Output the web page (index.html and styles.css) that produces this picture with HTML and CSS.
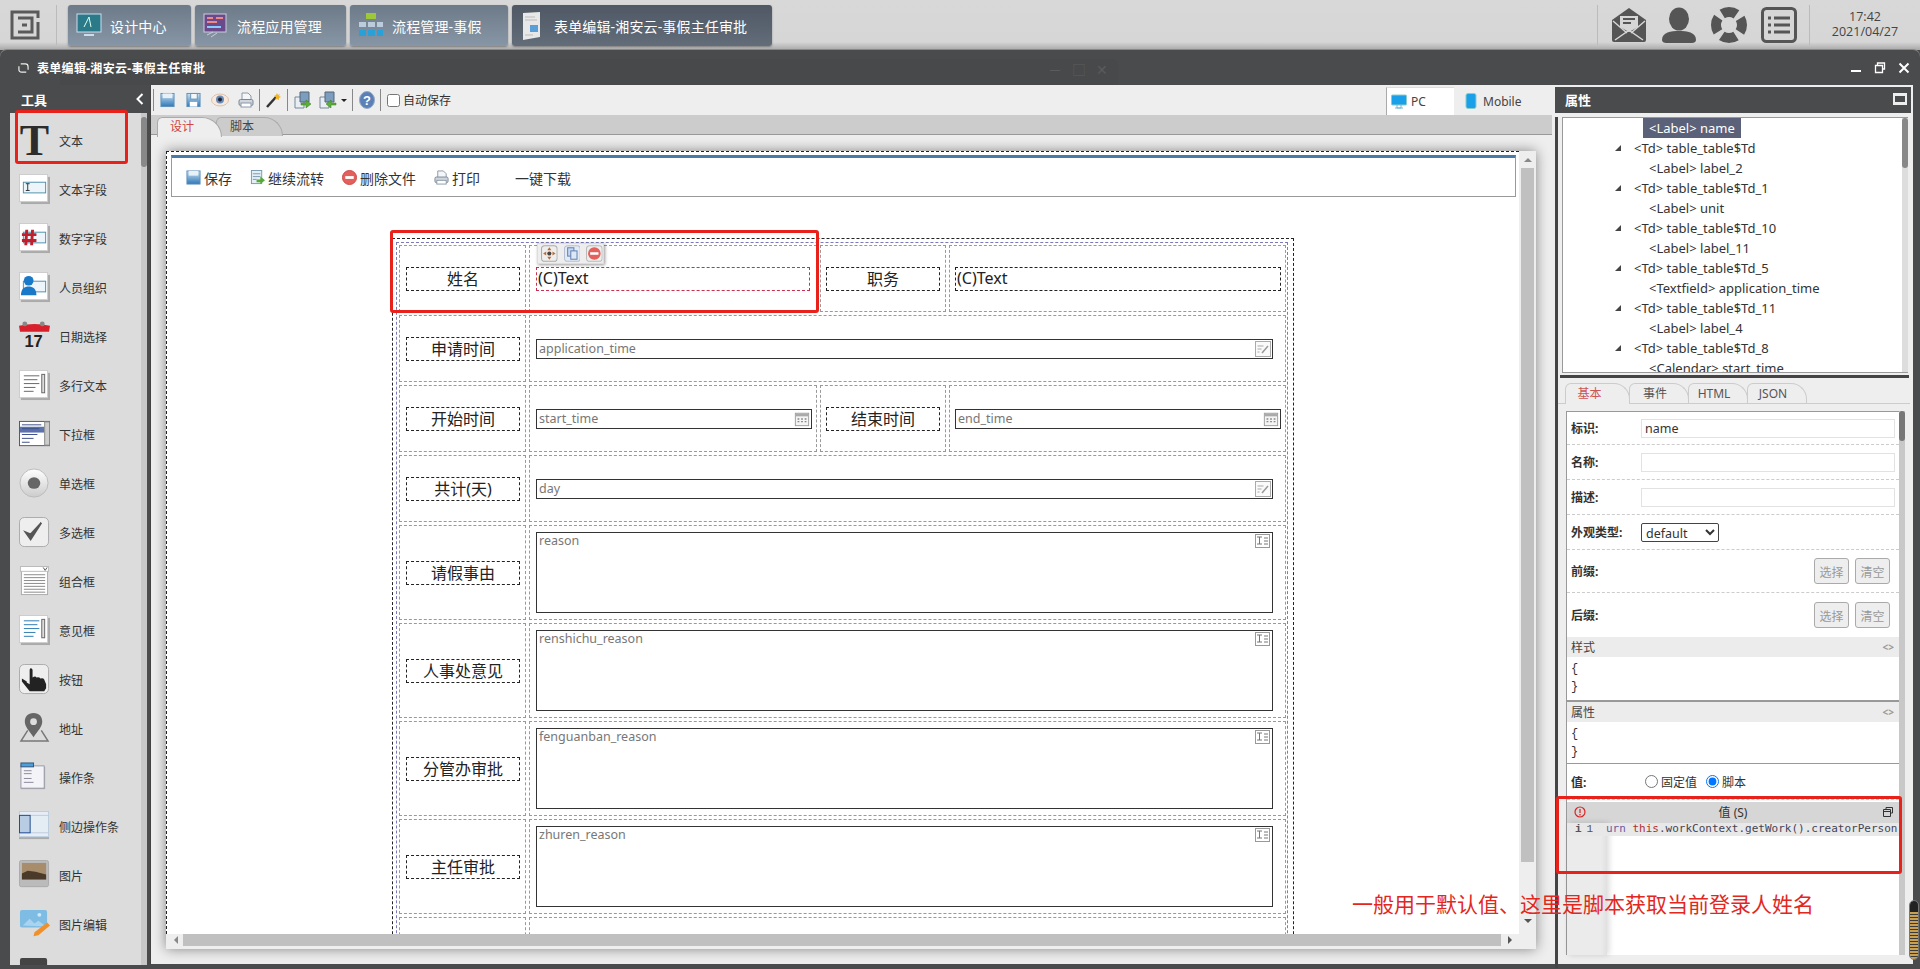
FILE: index.html
```html
<!DOCTYPE html>
<html lang="zh">
<head>
<meta charset="utf-8">
<title>表单编辑</title>
<link rel="stylesheet" href="styles.css">
</head>
<body>
<svg class="defs" aria-hidden="true">
  <symbol id="i-field" viewBox="0 0 32 32"><rect x="2" y="3" width="30" height="28" fill="#aaa"/><rect x=".5" y=".5" width="29" height="28" fill="#fff" stroke="#ccc"/><rect x="4.500" y="8.500" width="23" height="11" fill="#eef5fa" stroke="#4f90ad"/><path d="M7 10h4M9 10v7M7 17h4" stroke="#333" fill="none"/></symbol>
  <symbol id="i-num" viewBox="0 0 32 32"><rect x="2" y="3" width="30" height="28" fill="#aaa"/><rect x=".5" y=".5" width="29" height="28" fill="#fff" stroke="#ccc"/><rect x="4.500" y="9.500" width="23" height="11" fill="#eef5fa" stroke="#4f90ad"/><path d="M8 7l-1 16M14 7l-1 16M3 12h15M3 18h15" stroke="#c21f2e" stroke-width="3" fill="none"/></symbol>
  <symbol id="i-person" viewBox="0 0 32 32"><rect x="2" y="3" width="30" height="28" fill="#aaa"/><rect x=".5" y=".5" width="29" height="28" fill="#fff" stroke="#ccc"/><rect x="4.500" y="9.500" width="23" height="11" fill="#eef5fa" stroke="#4f90ad"/><circle cx="10" cy="9" r="5" fill="#1a78c8"/><path d="M2 24c0-7 4-9 8-9s8 2 8 9z" fill="#1a78c8"/></symbol>
  <symbol id="i-multi" viewBox="0 0 32 32"><rect x="2" y="3" width="30" height="28" fill="#aaa"/><rect x=".5" y=".5" width="29" height="28" fill="#fff" stroke="#ccc"/><path d="M5 6h16M5 10h14M5 14h16M5 18h12M5 22h10" stroke="#666"/><rect x="23.500" y="4.500" width="3" height="19" fill="#ddd" stroke="#666"/></symbol>
  <symbol id="i-select" viewBox="0 0 32 32"><rect x=".5" y="2.500" width="31" height="25" fill="#fff" stroke="#556"/><rect x="1" y="8" width="25" height="6" fill="#5c72ac"/><path d="M3 6h20M3 10h18M3 16h16M3 20h12M3 24h8" stroke="#3c5088"/><rect x="26.500" y="3" width="5" height="24" fill="#ccc" stroke="#888"/></symbol>
  <symbol id="i-radio" viewBox="0 0 32 32"><defs><linearGradient id="g-radio" x1="0" y1="0" x2="0" y2="1"><stop offset="0" stop-color="#fff"/><stop offset="1" stop-color="#ccc"/></linearGradient></defs><ellipse cx="15.500" cy="15.500" rx="14.500" ry="14.500" fill="url(#g-radio)" stroke="#bbb"/><ellipse cx="15.500" cy="15.500" rx="6.500" ry="6" fill="#666"/></symbol>
  <symbol id="i-check" viewBox="0 0 32 32"><rect x=".5" y=".5" width="30" height="30" rx="5" fill="#eee" stroke="#aaa"/><path d="M7 16l5 7 11-17-11 12z" fill="#555" stroke="#555" stroke-width="2"/></symbol>
  <symbol id="i-combo" viewBox="0 0 32 32"><rect x="2.500" y=".5" width="27" height="29" fill="#fff" stroke="#aaa"/><rect x="1.500" y=".5" width="29" height="5" fill="#fff" stroke="#bbb"/><path d="M5 9h22M5 12h22M5 15h22M5 18h22M5 21h22M5 24h22M5 27h22" stroke="#888"/><path d="M25 1.500l2 3 2-3" fill="none" stroke="#555"/></symbol>
  <symbol id="i-opinion" viewBox="0 0 32 32"><rect x="2" y="3" width="30" height="28" fill="#aaa"/><rect x=".5" y=".5" width="29" height="28" fill="#fff" stroke="#ccc"/><path d="M5 6h16M5 10h14M5 14h16M5 18h12M5 22h10" stroke="#2a7ab0"/><rect x="23.500" y="4.500" width="3" height="19" fill="#ddd" stroke="#666"/></symbol>
  <symbol id="i-hand" viewBox="0 0 32 32"><rect x=".5" y=".5" width="30" height="30" rx="5" fill="#eee" stroke="#aaa"/><path d="M3 15l5 3V19l3 2V6q1-3 3 0v8q3-2 4 0 3-1 4 1 3-1 4 1l2 5v4l-2 3H11L3 18z" fill="#222"/></symbol>
  <symbol id="i-addr" viewBox="0 0 32 32"><path d="M9 18L2 29h28l-7-11" fill="none" stroke="#777" stroke-width="1.500"/><path d="M15 0c-6 0-9 4-9 9 0 5 5 10 9 16 4-6 9-11 9-16 0-5-3-9-9-9z" fill="#666"/><circle cx="15" cy="9" r="3.500" fill="#ddd"/></symbol>
  <symbol id="i-act" viewBox="0 0 32 32"><rect x="2" y="5" width="25" height="23" fill="#aaa"/><rect x="2" y="4" width="24" height="23" fill="#f4f4f8" stroke="#99a"/><rect x="2" y="1" width="13" height="4" fill="#4aa0dc" stroke="#357"/><path d="M5 9h8M5 12h8M5 17h8M5 21h10" stroke="#889"/></symbol>
  <symbol id="i-side" viewBox="0 0 32 32"><rect x=".5" y=".5" width="30" height="26" fill="#e6edf6" stroke="#bcd"/><rect x=".5" y="4.500" width="30" height="18" fill="#e4ecf4" stroke="#bcd"/><rect x=".5" y="4.500" width="11" height="18" fill="#b8cce4" stroke="#1f4a90"/><rect y="27" width="31" height="2" fill="#aaa"/></symbol>
  <symbol id="i-img" viewBox="0 0 32 32"><rect x=".5" y=".5" width="30" height="27" rx="2" fill="#bbb" stroke="#aaa"/><rect x="3" y="3" width="25" height="17" fill="#a78d6c"/><path d="M3 14l6-3 8 1 11 3v5H3z" fill="#4a3a2a"/></symbol>
  <symbol id="i-imgedit" viewBox="0 0 32 32"><rect x="1" y="1" width="28" height="18" rx="2" fill="#7fbce4"/><path d="M4 17l7-7 5 5 4-3 8 6z" fill="#a8d4f0"/><circle cx="21" cy="6" r="2" fill="#cfe8f8"/><path d="M16 24l13-10 3 3-12 10-5 1z" fill="#f0902a"/></symbol>
  <symbol id="i-dark" viewBox="0 0 32 32"><rect x="1" y="0" width="28" height="30" rx="2" fill="#444"/></symbol>
  <symbol id="i-save" viewBox="0 0 16 16"><defs><linearGradient id="g-save" x1="0" y1="0" x2="0" y2="1"><stop offset="0" stop-color="#cfe2f2"/><stop offset="1" stop-color="#2e78b8"/></linearGradient></defs><rect x="1" y="1" width="14" height="14" fill="url(#g-save)" stroke="#5d8fb8"/><rect x="3" y="1" width="10" height="5" fill="#e8f0f8"/></symbol>
  <symbol id="i-saveas" viewBox="0 0 16 16"><rect x="1" y="1" width="14" height="14" fill="url(#g-save)" stroke="#5d8fb8"/><rect x="5" y="1" width="7" height="6" fill="#f4f8fc" stroke="#6890b0"/><rect x="4" y="10" width="8" height="5" fill="#fff"/></symbol>
  <symbol id="i-eye" viewBox="0 0 18 16"><ellipse cx="9" cy="8" rx="8.500" ry="6" fill="#f6e8dc" stroke="#e0c0a8"/><circle cx="9" cy="7.500" r="4" fill="#6a8cb8"/><circle cx="9" cy="7.500" r="2" fill="#223"/></symbol>
  <symbol id="i-print" viewBox="0 0 16 16"><path d="M4 1h6l3 3v4H4z" fill="#f4f6f8" stroke="#8a98a8"/><rect x="1" y="7.500" width="14" height="6" rx="1.500" fill="#cfd6de" stroke="#7a8896"/><rect x="3" y="11" width="10" height="4" fill="#fff" stroke="#8a98a8"/></symbol>
  <symbol id="i-wand" viewBox="0 0 16 16"><path d="M1 15L10 5" stroke="#333" stroke-width="2.500"/><path d="M11 1l1 2 2-1-1 2 2 1-2 1 0 2-2-1-2 1 1-3-2-1 2-1z" fill="#f0b428"/></symbol>
  <symbol id="i-imp" viewBox="0 0 18 18"><path d="M1 6h9v11H1z" fill="#e8eef4" stroke="#789"/><path d="M6 1h9v10H6z" fill="#7c9cc0" stroke="#567"/><path d="M7 12h5V9l5 4-5 4v-3H7z" fill="#5cae3a" stroke="#3a7a24" stroke-width=".5"/></symbol>
  <symbol id="i-exp" viewBox="0 0 18 18"><path d="M1 6h9v11H1z" fill="#e8eef4" stroke="#789"/><path d="M6 1h9v10H6z" fill="#7c9cc0" stroke="#567"/><path d="M17 12h-5V9l-5 4 5 4v-3h5z" fill="#5cae3a" stroke="#3a7a24" stroke-width=".5"/></symbol>
  <symbol id="i-cont" viewBox="0 0 16 16"><rect x="1.500" y=".5" width="11" height="14" fill="#e4eef6" stroke="#7898b0"/><path d="M3 4h8M3 7h8M3 10h4" stroke="#7898b0"/><path d="M7 10h4V7l5 4-5 4v-2H7z" fill="#58a838"/></symbol>
  <symbol id="i-del" viewBox="0 0 16 16"><circle cx="8" cy="8" r="7.500" fill="#e4605c" stroke="#c84844"/><rect x="3.500" y="6.500" width="9" height="3" fill="#fff"/></symbol>
  <symbol id="i-move" viewBox="0 0 16 16"><rect x=".5" y=".5" width="15" height="15" rx="3" fill="#eee" stroke="#aaa"/><path d="M8 2l2 3H6zM8 14l2-3H6zM2 8l3-2v4zM14 8l-3-2v4z" fill="#c46a2c"/><circle cx="8" cy="8" r="2" fill="#444"/></symbol>
  <symbol id="i-copy" viewBox="0 0 16 16"><rect x=".5" y=".5" width="15" height="15" rx="3" fill="#e4eaf4" stroke="#b4c0d4"/><rect x="3.500" y="2.500" width="6" height="8" fill="#c8d8ee" stroke="#6484b4"/><rect x="6.500" y="5.500" width="6" height="8" fill="#dce8f6" stroke="#6484b4"/></symbol>
  <symbol id="i-rem" viewBox="0 0 16 16"><rect x=".5" y=".5" width="15" height="15" rx="3" fill="#eee" stroke="#bbb"/><circle cx="8" cy="8" r="6" fill="#e4605c"/><rect x="4" y="6.800" width="8" height="2.400" fill="#fff"/></symbol>
  <symbol id="i-edit" viewBox="0 0 16 16"><rect x=".5" y=".5" width="15" height="15" fill="#fafafa" stroke="#aaa"/><path d="M2.500 5h6M2.500 8h4M2.500 11h2" stroke="#aaa"/><path d="M7 12l6-7" stroke="#999" stroke-width="1.500"/></symbol>
  <symbol id="i-date" viewBox="0 0 16 18"><rect x=".5" y="2.500" width="15" height="14" fill="#f4f4f4" stroke="#999"/><rect x="1" y="3" width="14" height="3" fill="#aaa"/><path d="M3 9h2M7 9h2M11 9h2M3 12h2M7 12h2M11 12h2" stroke="#888" stroke-width="1.500"/></symbol>
  <symbol id="i-ta" viewBox="0 0 15 14"><rect x=".5" y=".5" width="14" height="13" fill="#fff" stroke="#999"/><path d="M2 3h5M4.500 3v7M2 10h5M9 4h4M9 7h4M9 10h4" stroke="#777"/></symbol>
</svg>

<header class="topbar">
  <svg class="logo" viewBox="0 0 30 30"><path d="M28 8V2H2v26h26V12" fill="none" stroke="#5a5a5a" stroke-width="3"/><path d="M8 8h14v14H8" fill="none" stroke="#5a5a5a" stroke-width="3"/><path d="M12 15h5" stroke="#5a5a5a" stroke-width="3"/></svg>
  <span class="vsep first"></span>
  <nav class="apptabs">
    <div class="apptab w1">
      <svg class="apptab-ic" viewBox="0 0 26 28"><rect x="1" y="2" width="24" height="18" fill="#2a7a8a" stroke="#cde"/><path d="M8 15L13 5l2 10" stroke="#dfe" fill="none"/><rect x="8" y="22" width="10" height="2" fill="#cde"/></svg>
      <span>设计中心</span>
    </div>
    <div class="apptab w2">
      <svg class="apptab-ic" viewBox="0 0 26 28"><rect x="1" y="2" width="22" height="18" fill="#6a4a8a" stroke="#ccd"/><path d="M4 6h6M4 10h10M13 6h7" stroke="#e88" stroke-width="2"/><path d="M4 15h14" stroke="#8cf" stroke-width="2"/><path d="M4 23l6-3M8 25l6-4" stroke="#ccd"/></svg>
      <span>流程应用管理</span>
    </div>
    <div class="apptab w3">
      <svg class="apptab-ic" viewBox="0 0 26 28"><rect x="8" y="1" width="10" height="6" fill="#9cc83a"/><path d="M1 10h7v5H1zM10 10h7v5h-7zM19 10h6v5h-6z" fill="#bcd"/><path d="M1 18h7v6H1zM10 18h7v6h-7zM19 18h6v6h-6z" fill="#2aa0d8"/></svg>
      <span>流程管理-事假</span>
    </div>
    <div class="apptab w4 active">
      <svg class="apptab-ic" viewBox="0 0 26 28"><path d="M3 1l17-1v25L3 28z" fill="#e8e8e8"/><rect x="10" y="13" width="8" height="7" fill="#5aa0d8"/><path d="M5 5h10M5 8h12M5 23h8" stroke="#bbb"/></svg>
      <span>表单编辑-湘安云-事假主任审批</span>
    </div>
  </nav>
  <div class="sysarea">
    <span class="vsep"></span>
    <svg class="sys-ic" viewBox="0 0 36 36"><path d="M18 1L35 13v20a2 2 0 0 1-2 2H3a2 2 0 0 1-2-2V13z" fill="#555"/><path d="M9 9h18v11l-9 5-9-5z" fill="#d6d6d6"/><path d="M12 12h12M12 16h8" stroke="#555" stroke-width="2"/><path d="M2 14l14 12M34 14L20 26M4 33l13-9h2l13 9" stroke="#d6d6d6" stroke-width="1.500" fill="none"/></svg>
    <svg class="sys-ic" viewBox="0 0 36 36"><ellipse cx="18" cy="12" rx="10" ry="11.500" fill="#555"/><path d="M1 33c0-8 9-9 17-9s17 1 17 9c0 2-2 3-4 3H5c-2 0-4-1-4-3z" fill="#555"/></svg>
    <svg class="sys-ic" viewBox="0 0 36 36"><circle cx="18" cy="18" r="13" fill="none" stroke="#555" stroke-width="10" stroke-dasharray="15 5.420" stroke-dashoffset="7.500"/></svg>
    <svg class="sys-ic" viewBox="0 0 36 36"><rect x="1.500" y="1.500" width="33" height="33" rx="4" fill="#d6d6d6" stroke="#555" stroke-width="3"/><path d="M13 11h16M13 18h16M13 25h16" stroke="#555" stroke-width="3"/><path d="M7 11h3M7 18h3M7 25h3" stroke="#555" stroke-width="3"/></svg>
    <span class="vsep last"></span>
    <div class="clock"><div>17:42</div><div>2021/04/27</div></div>
  </div>
</header>

<section class="window">
  <div class="titlebar">
    <div class="ghost"><span>－</span><span>□</span><span>✕</span></div>
    <svg class="title-ic" viewBox="0 0 12 14"><path d="M3 2.500h5q3 0 3 3V9M9 11.500H4q-3 0-3-3V5" fill="none" stroke="#eee" stroke-width="1.300"/></svg>
    <span class="title-text">表单编辑-湘安云-事假主任审批</span>
    <div class="winbtns">
      <svg viewBox="0 0 12 12"><rect x="1" y="8" width="10" height="2" fill="#fff"/></svg>
      <svg viewBox="0 0 12 12"><path d="M3.500 3V1h7v6H8.500M1.500 3.500h7v7h-7z" fill="none" stroke="#fff" stroke-width="1.300"/></svg>
      <svg viewBox="0 0 12 12"><path d="M1.500 1.500l9 9M10.500 1.500l-9 9" stroke="#fff" stroke-width="2"/></svg>
    </div>
  </div>

  <div class="winbody">
    <aside class="tools">
      <div class="panel-head"><span>工具</span><svg class="collapse" viewBox="0 0 8 12"><path d="M6.500 1L1.500 6l5 5" fill="none" stroke="#fff" stroke-width="2"/></svg></div>
      <div class="toollist">
        <div class="tool"><span class="tool-t">T</span><span>文本</span></div>
        <div class="tool"><svg class="tool-ic"><use href="#i-field"/></svg><span>文本字段</span></div>
        <div class="tool"><svg class="tool-ic"><use href="#i-num"/></svg><span>数字字段</span></div>
        <div class="tool"><svg class="tool-ic"><use href="#i-person"/></svg><span>人员组织</span></div>
        <div class="tool"><svg class="tool-ic" viewBox="0 0 32 32"><path d="M0 5q16-4 32 0l-1 6H1z" fill="#d8202c"/><circle cx="6" cy="3" r="2.500" fill="#888"/><circle cx="24" cy="3" r="2.500" fill="#888"/><text x="15" y="27" text-anchor="middle" class="cal-num">17</text></svg><span>日期选择</span></div>
        <div class="tool"><svg class="tool-ic"><use href="#i-multi"/></svg><span>多行文本</span></div>
        <div class="tool"><svg class="tool-ic"><use href="#i-select"/></svg><span>下拉框</span></div>
        <div class="tool"><svg class="tool-ic"><use href="#i-radio"/></svg><span>单选框</span></div>
        <div class="tool"><svg class="tool-ic"><use href="#i-check"/></svg><span>多选框</span></div>
        <div class="tool"><svg class="tool-ic"><use href="#i-combo"/></svg><span>组合框</span></div>
        <div class="tool"><svg class="tool-ic"><use href="#i-opinion"/></svg><span>意见框</span></div>
        <div class="tool"><svg class="tool-ic"><use href="#i-hand"/></svg><span>按钮</span></div>
        <div class="tool"><svg class="tool-ic"><use href="#i-addr"/></svg><span>地址</span></div>
        <div class="tool"><svg class="tool-ic"><use href="#i-act"/></svg><span>操作条</span></div>
        <div class="tool"><svg class="tool-ic"><use href="#i-side"/></svg><span>侧边操作条</span></div>
        <div class="tool"><svg class="tool-ic"><use href="#i-img"/></svg><span>图片</span></div>
        <div class="tool"><svg class="tool-ic"><use href="#i-imgedit"/></svg><span>图片编辑</span></div>
        <div class="tool"><svg class="tool-ic"><use href="#i-dark"/></svg></div>
      </div>
      <div class="tool-scroll"></div>
      <div class="redbox redbox-tool"></div>
    </aside>

    <main class="center">
      <div class="toolbar">
        <span class="tsep"></span>
        <svg class="tb-ic s1"><use href="#i-save"/></svg>
        <svg class="tb-ic s2"><use href="#i-saveas"/></svg>
        <svg class="tb-ic s3"><use href="#i-eye"/></svg>
        <svg class="tb-ic s4"><use href="#i-print"/></svg>
        <span class="tsep s5"></span>
        <svg class="tb-ic s6"><use href="#i-wand"/></svg>
        <span class="tsep s5"></span>
        <svg class="tb-ic s7"><use href="#i-imp"/></svg>
        <svg class="tb-ic s8"><use href="#i-exp"/></svg>
        <span class="caret"></span>
        <span class="tsep s5"></span>
        <svg class="tb-ic s6" viewBox="0 0 16 18"><ellipse cx="8" cy="9" rx="7.500" ry="8.500" fill="#5a80b8" stroke="#98a8c0"/><text x="8" y="14" text-anchor="middle" class="help-q">?</text></svg>
        <span class="tsep s5"></span>
        <label class="autosave"><input type="checkbox"><span>自动保存</span></label>
        <div class="device">
          <div class="dev-tab on">
            <svg viewBox="0 0 16 16"><rect x=".5" y="1" width="15" height="10" rx="1" fill="#1aa0e8" stroke="#8cc"/><path d="M4 14h8M6 11v3h4v-3" stroke="#7bc" fill="none"/></svg>
            <span>PC</span>
          </div>
          <div class="dev-tab">
            <svg viewBox="0 0 12 16"><rect x="1" y=".5" width="10" height="15" rx="2" fill="#1aa0e8" stroke="#8cc"/></svg>
            <span>Mobile</span>
          </div>
        </div>
      </div>
      <div class="tabbar">
        <div class="dtab on">设计</div>
        <div class="dtab">脚本</div>
      </div>
      <div class="stage">
        <div class="canvas">
          <div class="canvas-main">
            <div class="formbar">
              <span class="fb-item"><svg><use href="#i-save"/></svg>保存</span>
              <span class="fb-item"><svg><use href="#i-cont"/></svg>继续流转</span>
              <span class="fb-item"><svg><use href="#i-del"/></svg>删除文件</span>
              <span class="fb-item"><svg><use href="#i-print"/></svg>打印</span>
              <span class="fb-item plain">一键下载</span>
            </div>
            <div class="tbl">
              <div class="tbl-inner">
                <div class="grid">
                  <div class="cell short"><div class="lbl">姓名</div></div>
                  <div class="cell short ctrl">
                    <div class="actions"><svg><use href="#i-move"/></svg><svg><use href="#i-copy"/></svg><svg><use href="#i-rem"/></svg></div>
                    <div class="val sel">(C)Text</div>
                  </div>
                  <div class="cell short c3"><div class="lbl">职务</div></div>
                  <div class="cell short c4"><div class="val">(C)Text</div></div>

                  <div class="cell short"><div class="lbl">申请时间</div></div>
                  <div class="cell short ctrl span3"><div class="inp wide"><span>application_time</span><svg><use href="#i-edit"/></svg></div></div>

                  <div class="cell short"><div class="lbl">开始时间</div></div>
                  <div class="cell short ctrl"><div class="inp half"><span>start_time</span><svg><use href="#i-date"/></svg></div></div>
                  <div class="cell short c3"><div class="lbl">结束时间</div></div>
                  <div class="cell short c4"><div class="inp half2"><span>end_time</span><svg><use href="#i-date"/></svg></div></div>

                  <div class="cell short"><div class="lbl">共计(天)</div></div>
                  <div class="cell short ctrl span3"><div class="inp wide"><span>day</span><svg><use href="#i-edit"/></svg></div></div>

                  <div class="cell"><div class="lbl">请假事由</div></div>
                  <div class="cell ctrl span3 top"><div class="area"><span>reason</span><svg><use href="#i-ta"/></svg></div></div>

                  <div class="cell"><div class="lbl">人事处意见</div></div>
                  <div class="cell ctrl span3 top"><div class="area"><span>renshichu_reason</span><svg><use href="#i-ta"/></svg></div></div>

                  <div class="cell"><div class="lbl">分管办审批</div></div>
                  <div class="cell ctrl span3 top"><div class="area"><span>fenguanban_reason</span><svg><use href="#i-ta"/></svg></div></div>

                  <div class="cell"><div class="lbl">主任审批</div></div>
                  <div class="cell ctrl span3 top"><div class="area"><span>zhuren_reason</span><svg><use href="#i-ta"/></svg></div></div>

                  <div class="cell"></div>
                  <div class="cell ctrl span3"></div>
                </div>
              </div>
              <div class="redbox redbox-row"></div>
            </div>
          </div>
          <div class="vscroll"><span class="arrow up"></span><div class="vthumb"></div><span class="arrow down"></span></div>
          <div class="hscroll"><span class="arrow left"></span><div class="hthumb"></div><span class="arrow right"></span></div>
          <div class="corner"></div>
        </div>
      </div>
    </main>

    <aside class="props">
      <div class="panel-head ph-right"><span>属性</span><span class="maxbtn"></span></div>
      <div class="props-body">
        <div class="tree">
          <div class="tn d2"><span class="hl">&lt;Label&gt; name</span></div>
          <div class="tn d1"><i></i>&lt;Td&gt; table_table$Td</div>
          <div class="tn d2"><span>&lt;Label&gt; label_2</span></div>
          <div class="tn d1"><i></i>&lt;Td&gt; table_table$Td_1</div>
          <div class="tn d2"><span>&lt;Label&gt; unit</span></div>
          <div class="tn d1"><i></i>&lt;Td&gt; table_table$Td_10</div>
          <div class="tn d2"><span>&lt;Label&gt; label_11</span></div>
          <div class="tn d1"><i></i>&lt;Td&gt; table_table$Td_5</div>
          <div class="tn d2"><span>&lt;Textfield&gt; application_time</span></div>
          <div class="tn d1"><i></i>&lt;Td&gt; table_table$Td_11</div>
          <div class="tn d2"><span>&lt;Label&gt; label_4</span></div>
          <div class="tn d1"><i></i>&lt;Td&gt; table_table$Td_8</div>
          <div class="tn d2"><span>&lt;Calendar&gt; start_time</span></div>
          <div class="tree-scroll"></div>
        </div>
        <div class="divider"></div>
        <div class="ptabs">
          <div class="ptab on">基本</div>
          <div class="ptab">事件</div>
          <div class="ptab">HTML</div>
          <div class="ptab">JSON</div>
        </div>
        <div class="pform">
          <div class="pform-main">
            <div class="prow"><b>标识:</b><div class="ptext">name</div></div>
            <div class="prow"><b>名称:</b><div class="ptext"></div></div>
            <div class="prow"><b>描述:</b><div class="ptext"></div></div>
            <div class="prow"><b>外观类型:</b><select class="psel"><option>default</option></select></div>
            <div class="prow tall"><b>前缀:</b><div class="pbtns"><button>选择</button><button>清空</button></div></div>
            <div class="prow tall last"><b>后缀:</b><div class="pbtns"><button>选择</button><button>清空</button></div></div>
            <div class="sec thick"><div class="sec-head"><span>样式</span><em>&lt;&gt;</em></div><div class="sec-code">{<br>}</div></div>
            <div class="sec"><div class="sec-head"><span>属性</span><em>&lt;&gt;</em></div><div class="sec-code">{<br>}</div></div>
            <div class="prow valrow"><b>值:</b><label class="rad"><input type="radio" name="v"><span>固定值</span></label><label class="rad"><input type="radio" name="v" checked><span>脚本</span></label></div>
            <div class="editor">
              <div class="ed-head">
                <svg class="ed-err" viewBox="0 0 12 12"><circle cx="6" cy="6" r="5" fill="none" stroke="#d22" stroke-width="1.200"/><path d="M6 3v4M6 8v1.500" stroke="#d22" stroke-width="1.200"/></svg>
                <span>值 (S)</span>
                <svg class="ed-max" viewBox="0 0 10 10"><path d="M3 2.500V.5h6.500v5.500H7.500M.5 2.500h7v7h-7zM.5 4.500h7" fill="none" stroke="#333"/></svg>
              </div>
              <div class="ed-body">
                <div class="ed-gutter"></div>
                <div class="ed-line"><span class="ed-no"><em>i</em>1</span><code><span class="kw1">urn</span> <span class="kw2">this</span>.workContext.getWork().creatorPerson</code></div>
              </div>
            </div>
          </div>
          <div class="pscroll"><div class="pthumb"></div></div>
        </div>
      </div>
      <div class="redbox redbox-ed"></div>
    </aside>

    <p class="note">一般用于默认值、这里是脚本获取当前登录人姓名</p>
    <div class="gold"></div>
  </div>
</section>
</body>
</html>
```

FILE: styles.css
```css
* { box-sizing: border-box; }
html, body { margin: 0; padding: 0; height: 969px; overflow: hidden; }
body { font-family: "Noto Sans", "Noto Sans CJK SC", sans-serif; font-size: 12px; color: #333; background: #4a4b4d; }
.defs { width: 0; height: 0; position: absolute; }
.cal-num { font: bold 17px "Liberation Sans", sans-serif; fill: #222; }
.help-q { font: bold 13px "Liberation Sans", sans-serif; fill: #fff; }

/* top bar */
.topbar { height: 50px; display: flex; align-items: flex-start; background: linear-gradient(#d8d8d8 0, #d6d6d6 42px, #a8a8a8 50px); }
.logo { width: 30px; height: 30px; margin: 10px 0 0 10px; flex: none; }
.vsep { width: 1px; height: 40px; margin-top: 5px; background: #bbb; flex: none; }
.vsep.first { margin-left: 16px; }
.apptabs { display: flex; gap: 4px; margin: 5px 0 0 11px; }
.apptab { height: 41px; display: flex; align-items: center; color: #fff; font-size: 14px; letter-spacing: .15px; border-radius: 3px; background: linear-gradient(#6d7a88, #8796a6); box-shadow: 0 1px 2px rgba(0,0,0,.35); }
.apptab.active { background: linear-gradient(#4f5864, #626d79); }
.apptab-ic { width: 26px; height: 28px; margin: 0 8px 0 8px; flex: none; }
.w1 { width: 123px; }
.w2 { width: 151px; }
.w3 { width: 158px; }
.w4 { width: 260px; }
.sysarea { margin-left: auto; display: flex; align-items: flex-start; height: 50px; }
.sys-ic { width: 36px; height: 36px; margin: 7px 14px 0 0; flex: none; }
.sysarea .vsep:first-child { margin-right: 13px; }
.sysarea .vsep.last { margin: 5px 0 0 -2px; }
.clock { width: 110px; text-align: center; font-family: "Open Sans", sans-serif; font-size: 12.500px; line-height: 15px; color: #444; padding-top: 9px; }

/* window */
.window { height: 919px; background: #4a4b4d; border-radius: 7px 7px 0 0; box-shadow: 0 -1px 0 #888; display: flex; flex-direction: column; overflow: hidden; }
.titlebar { height: 35px; display: flex; align-items: center; position: relative; color: #fff; flex: none; }
.ghost { position: absolute; left: 60px; top: 9px; width: 1058px; height: 26px; background: #48494a; border-radius: 6px 6px 0 0; text-align: right; color: #5a5b5c; font-size: 14px; }
.ghost span { margin-right: 10px; }
.title-ic { width: 11px; height: 14px; margin-left: 18px; position: relative; }
.title-text { font-weight: 700; font-size: 12px; letter-spacing: .3px; margin-left: 8px; position: relative; }
.winbtns { margin-left: auto; display: flex; gap: 12px; padding-right: 10px; position: relative; }
.winbtns svg { width: 12px; height: 12px; }

.winbody { height: 879px; position: relative; display: flex; align-items: flex-start; padding-left: 10px; }

/* left tools */
.tools { width: 137px; height: 878px; position: relative; background: #dcdcdc; overflow: hidden; margin-top: 2px; flex: none; }
.panel-head { height: 26px; background: #4a4b4d; color: #fff; font-weight: 700; font-size: 13px; display: flex; align-items: center; justify-content: space-between; padding: 0 3px 2px 11px; }
.collapse { width: 8px; height: 12px; }
.toollist { padding-top: 3px; height: 852px; overflow: hidden; }
.tool { height: 49px; display: flex; align-items: center; padding-left: 9px; font-size: 12px; color: #333; }
.tool-ic { width: 31px; height: 31px; margin-right: 9px; flex: none; }
.tool-t { width: 31px; margin-right: 9px; font: bold 44px/44px "Liberation Serif", serif; color: #2c2c2c; text-align: center; flex: none; }
.tool-scroll { position: absolute; right: 0; top: 26px; bottom: 0; width: 6px; background: #c8c8c8; }
.tool-scroll::before { content: ""; display: block; width: 6px; height: 50px; border-radius: 3px; background: #888; margin-top: 4px; }
.redbox { position: absolute; border: 3px solid #e8221a; border-radius: 3px; pointer-events: none; }
.redbox-tool { left: 5px; top: 23px; width: 113px; height: 54px; }

/* centre */
.center { width: 1402px; height: 879px; margin-left: 3px; background: #eee; border-left: 1px solid #444; flex: none; }
.toolbar { height: 30px; display: flex; align-items: center; background: #eee; padding-left: 2px; }
.tsep { width: 1px; height: 22px; background: #888; flex: none; margin-right: 6px; }
.tb-ic { width: 15px; height: 16px; flex: none; }
.s1 { margin-right: 11px; }
.s2 { margin-right: 10px; }
.s3 { width: 18px; margin-right: 9px; }
.s4 { width: 16px; }
.s5 { margin-left: 5px; }
.s6 { width: 16px; height: 18px; }
.s7 { width: 18px; height: 18px; margin-right: 7px; }
.s8 { width: 18px; height: 18px; }
.caret { width: 0; height: 0; border: 3px solid transparent; border-top: 3px solid #222; margin: 3px 0 0 4px; }
.autosave { display: flex; align-items: center; font-size: 12px; color: #333; }
.autosave input { width: 13px; height: 13px; margin: 0 3px 0 0; }
.device { margin-left: auto; display: flex; align-self: flex-end; margin-right: 6px; height: 28px; }
.dev-tab { display: flex; align-items: center; width: 85px; padding-left: 4px; gap: 4px; font-size: 12px; color: #444; }
.dev-tab.on { width: 68px; margin-right: 7px; background: #fff; border-left: 1px solid #aaa; border-top: 1px solid #ddd; }
.dev-tab svg { width: 16px; height: 16px; flex: none; }
.dev-tab:not(.on) svg { width: 12px; margin-right: 2px; }

.tabbar { height: 20px; background: #ccc; border-bottom: 1px solid #999; display: flex; padding: 2px 0 0 6px; }
.dtab { height: 19px; width: 65px; background: #ccc; border: 1px solid #aaa; border-bottom: 0; border-radius: 6px 22px 0 0; padding-left: 12px; font-size: 12px; line-height: 17px; color: #444; margin-right: -6px; }
.dtab.on { background: #eee; color: #c44; position: relative; z-index: 1; height: 20px; }
.dtab:not(.on) { padding-left: 13px; width: 67px; }

.stage { height: 829px; padding: 16px 0 0 15px; background: #eee; }
.canvas { width: 1370px; height: 798px; background: #fff; box-shadow: 0 0 12px rgba(0,0,0,.45); display: grid; grid-template-columns: 1353px 17px; grid-template-rows: 783px 15px; }
.canvas-main { border-left: 1px dashed #222; border-top: 1px dashed #222; padding: 3px 0 0 4px; overflow: hidden; }
.formbar { width: 1345px; height: 42px; background: #fff; border: 1px solid #999; border-top: 3px solid #4a78a8; display: flex; align-items: center; padding: 1px 0 0 14px; font-size: 14px; color: #333; }
.fb-item { display: flex; align-items: center; margin-right: 18px; }
.fb-item svg { width: 15px; height: 15px; margin-right: 3px; }
.fb-item.plain { margin-left: 17px; }

.tbl { position: relative; width: 902px; margin: 41px 0 0 221px; border: 1px dashed #222; padding: 3px 5px 0 3px; }
.tbl-inner { border: 1px dashed #7a7ab8; padding: 2px 0 0 2px; }
.grid { display: grid; grid-template-columns: 127px 288px 126px 337px; grid-template-rows: repeat(4, 67px) repeat(5, 95px); gap: 3px; }
.cell { border: 1px dashed #999; display: flex; align-items: center; padding-left: 6px; position: relative; min-width: 0; }
.cell.c3 { padding-left: 5px; }
.cell.c4 { padding-left: 5px; }
.cell.span3 { grid-column: span 3; }
.cell.top { align-items: flex-start; padding-top: 6px; }
.lbl { width: 114px; height: 24px; border: 1px dashed #222; font-size: 16px; line-height: 23px; text-align: center; color: #222; flex: none; }
.val { width: 326px; height: 24px; border: 1px dashed #222; font-size: 16px; line-height: 21px; padding-left: 1px; color: #222; }
.val.sel { width: 274px; border-color: #c83050; }
.actions { position: absolute; left: 7px; top: -3px; width: 67px; height: 21px; background: #eee; border: 1px solid #ddd; display: flex; gap: 6px; align-items: center; padding-left: 3px; box-shadow: 1px 1px 3px rgba(0,0,0,.4); }
.actions svg { width: 17px; height: 17px; }
.inp { height: 20px; border: 1px solid #333; display: flex; align-items: center; justify-content: space-between; padding: 0 1px 0 2px; color: #777; font-size: 12.500px; }
.inp svg { width: 16px; height: 16px; flex: none; }
.inp.wide { width: 737px; }
.inp.half { width: 276px; }
.inp.half2 { width: 326px; }
.area { width: 737px; height: 81px; border: 1px solid #333; display: flex; justify-content: space-between; padding: 0 1px 0 2px; color: #777; font-size: 12.500px; line-height: 16px; }
.area svg { width: 15px; height: 14px; margin: 1px 1px 0 0; flex: none; }

.redbox-row { left: -3px; top: -9px; width: 429px; height: 83px; }

.vscroll { position: relative; background: #eee; grid-column: 2; grid-row: 1; }
.vthumb { position: absolute; left: 2px; top: 17px; width: 13px; height: 694px; background: #c0c0c0; }
.hscroll { position: relative; background: #eee; grid-column: 1; grid-row: 2; }
.hthumb { position: absolute; left: 17px; top: 0; width: 1318px; height: 12px; background: #c0c0c0; }
.corner { background: #eee; grid-column: 2; grid-row: 2; }
.arrow { position: absolute; width: 0; height: 0; border: 4px solid transparent; }
.arrow.up { left: 5px; top: 3px; border-bottom-color: #888; }
.arrow.down { left: 5px; top: 768px; border-top-color: #555; }
.arrow.left { left: 4px; top: 2px; border-right-color: #888; }
.arrow.right { left: 1342px; top: 2px; border-left-color: #555; }

/* right */
.props { width: 361px; height: 879px; position: relative; background: #eee; padding: 2px 2px 0 3px; flex: none; }
.ph-right { padding: 0 4px 2px 10px; }
.maxbtn { width: 14px; height: 12px; border-top: 3px solid #eee; border-bottom: 3px solid #eee; border-left: 2px solid #eee; border-right: 2px solid #eee; background-clip: content-box; background-color: #4a4b4d; }
.props-body { border-left: 3px solid #444; height: 851px; }
.tree { position: relative; margin: 4px 0 0 4px; width: 346px; height: 256px; background: #fff; border: 1px solid #999; border-right: 0; overflow: hidden; }
.tn { height: 20px; line-height: 20px; font-size: 13px; color: #333; white-space: nowrap; }
.d1 { padding-left: 52px; display: flex; align-items: center; }
.d1 i { width: 0; height: 0; border-left: 6px solid transparent; border-bottom: 6px solid #444; margin-right: 13px; }
.d2 { padding-left: 80px; }
.d2 span { display: inline-block; padding: 0 6px; height: 20px; }
.d2 .hl { background: #5b6178; color: #fff; }
.tree-scroll { position: absolute; right: 0; top: 0; bottom: 0; width: 6px; background: #ddd; }
.tree-scroll::before { content: ""; display: block; height: 50px; background: #888; border-radius: 3px; }
.divider { height: 3px; margin: 2px 2px 0 2px; background: #444; }
.ptabs { height: 26px; display: flex; padding: 5px 0 0 7px; border-bottom: 1px solid #ccc; margin-right: 1px; }
.ptab { height: 21px; width: 60px; border: 1px solid #ccc; border-bottom: 0; border-radius: 6px 16px 0 0; text-align: center; font-size: 12px; line-height: 19px; color: #555; margin-right: -1px; padding-right: 8px; }
.ptab.on { color: #c55; background: #eee; position: relative; z-index: 1; width: 65px; padding-right: 16px; }
.pform { display: flex; margin: 7px 0 0 8px; height: 544px; }
.pform-main { width: 333px; background: #fff; border-left: 1px solid #999; border-top: 1px solid #999; display: flex; flex-direction: column; }
.pscroll { width: 6px; background: #c8c8c8; }
.pthumb { width: 6px; height: 30px; background: #777; border-radius: 3px; }
.prow { display: flex; align-items: center; padding: 0 4px; border-bottom: 1px dashed #ccc; height: 35px; flex: none; }
.prow:first-child { height: 33px; }
.prow b { width: 70px; font-size: 12px; color: #333; flex: none; }
.ptext { width: 254px; height: 19px; border: 1px solid #e2e2e2; font-size: 12.500px; line-height: 17px; padding-left: 3px; color: #333; }
.psel { width: 78px; height: 19px; font: 12.500px "Noto Sans", sans-serif; padding: 0; border: 1px solid #444; border-radius: 2px; background: #fff; color: #333; }
.prow.tall { height: 43px; }
.prow.last { height: 44px; border-bottom: 0; }
.pbtns { margin-left: auto; display: flex; gap: 6px; padding-right: 5px; }
.pbtns button { width: 35px; height: 26px; padding: 0; border: 1px solid #aaa; border-radius: 3px; background: #eee; color: #999; font: 12px "Noto Sans CJK SC", sans-serif; }
.sec { flex: none; }
.sec-head { height: 20px; background: #ececec; display: flex; justify-content: space-between; align-items: center; padding: 0 4px; font-size: 12px; color: #444; }
.sec-head em { font-style: normal; color: #999; font-weight: 700; font-size: 10px; padding-right: 1px; }
.sec-code { font: 12px/18px "Liberation Mono", monospace; padding: 3px 4px 0; height: 42px; color: #333; border-bottom: 1px solid #999; }
.sec.thick .sec-code { height: 45px; border-bottom-width: 2px; }
.prow.valrow { height: 36px; border-bottom: 1px dashed #ccc; }
.valrow b { width: 74px; }
.rad { display: flex; align-items: center; font-size: 12px; margin-right: 9px; color: #333; }
.rad input { width: 13px; height: 13px; margin: 0 3px 0 0; }
.editor { flex: 1; display: flex; flex-direction: column; margin-top: 2px; }
.ed-head { height: 21px; background: #d6d6d6; position: relative; text-align: center; line-height: 21px; font-size: 12px; color: #333; }
.ed-err { position: absolute; left: 7px; top: 4px; width: 12px; height: 12px; }
.ed-max { position: absolute; right: 6px; top: 5px; width: 10px; height: 10px; }
.ed-body { flex: 1; position: relative; background: #fff; }
.ed-gutter { position: absolute; left: 0; top: 0; bottom: 0; width: 40px; background: linear-gradient(90deg, #ebebeb 85%, #e0e0e0); box-shadow: 2px 0 6px rgba(0,0,0,.15); }
.ed-line { position: relative; height: 13px; background: #e8e8e8; display: flex; font: 11px/12px "Liberation Mono", monospace; white-space: nowrap; overflow: hidden; color: #445; }
.ed-no { width: 39px; flex: none; padding-left: 8px; color: #555; }
.ed-no em { font-style: normal; font-weight: 700; margin-right: 5px; }
.kw1 { color: #6a5aa0; }
.kw2 { color: #b03030; }
.redbox-ed { left: 4px; top: 711px; width: 346px; height: 78px; }

.note { position: absolute; left: 1352px; top: 804px; margin: 0; font: 21px/28px "Noto Sans CJK SC", sans-serif; color: #e2281e; white-space: nowrap; }
.gold { position: absolute; left: 1910px; top: 816px; width: 8px; height: 58px; border-radius: 4px; background: repeating-linear-gradient(#c8a050 0 2px, #3a3a3a 2px 3px); border-top: 11px solid #222; outline: 1px solid #777; }
```
